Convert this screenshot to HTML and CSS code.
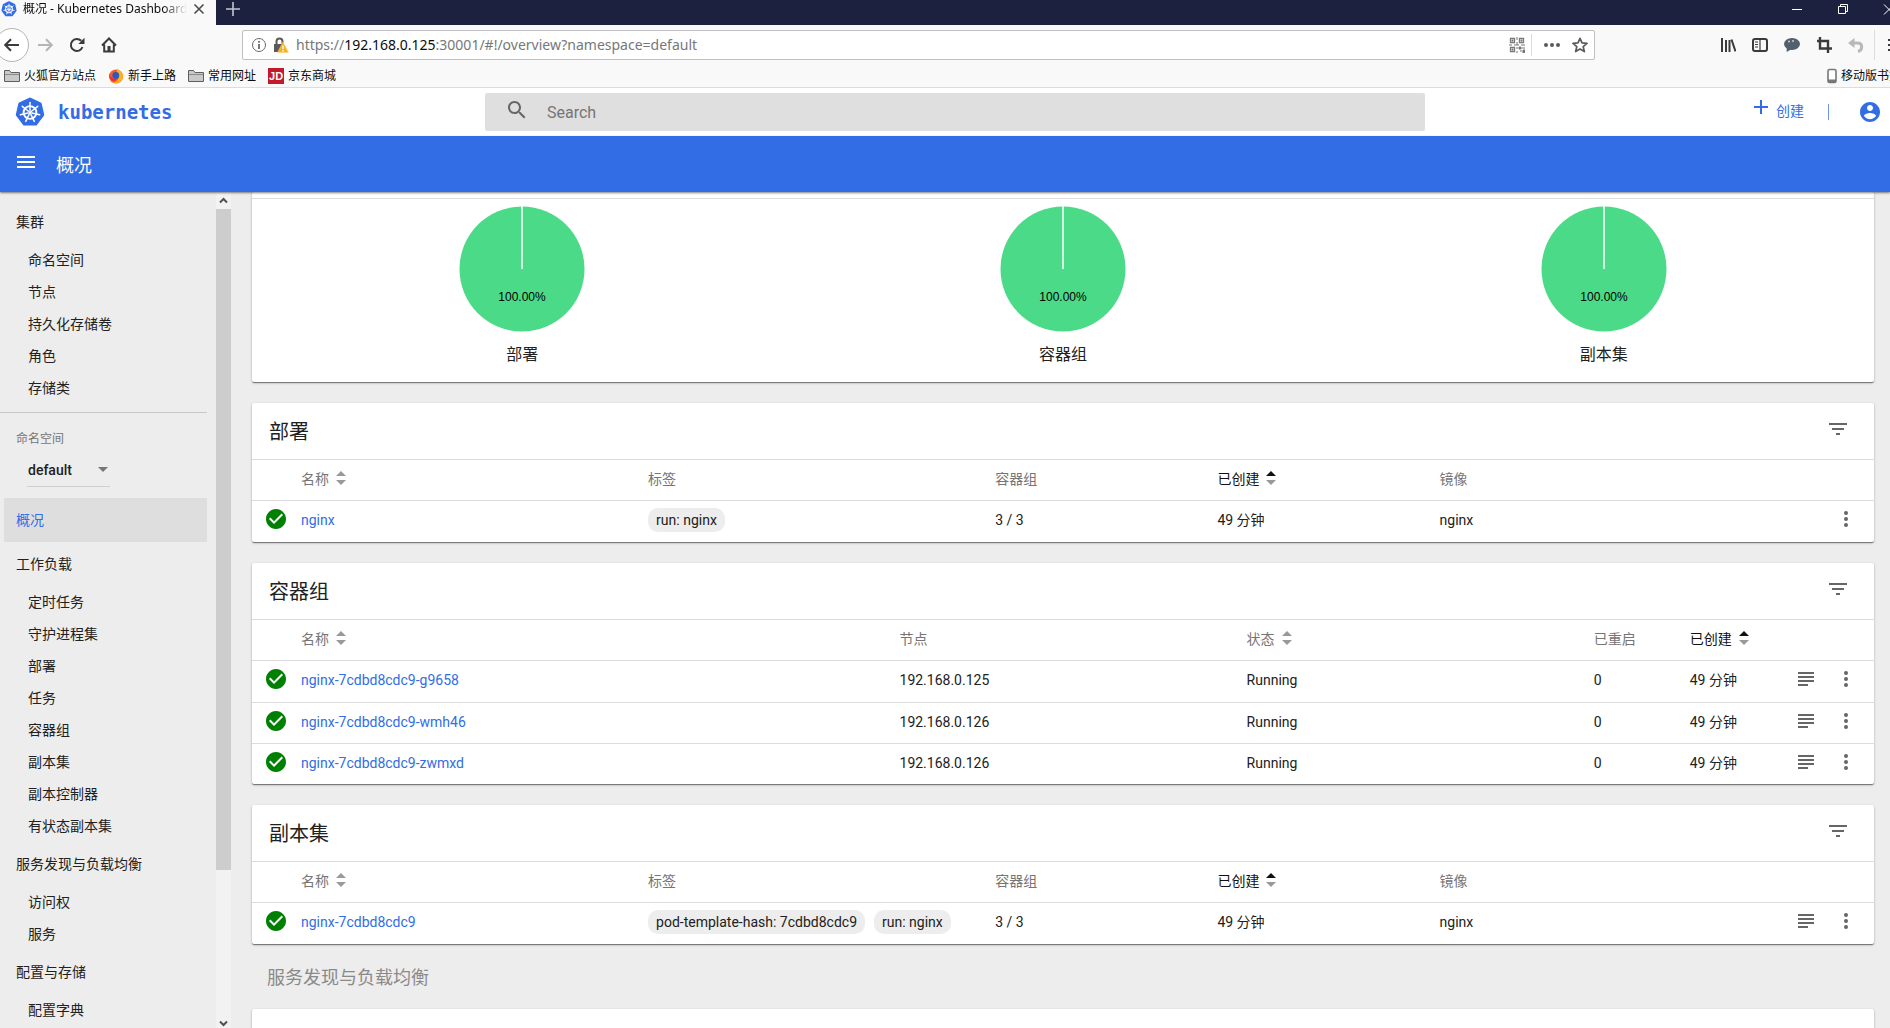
FILE: index.html
```html
<!DOCTYPE html>
<html lang="zh-CN">
<head>
<meta charset="utf-8">
<title>概况 - Kubernetes Dashboard</title>
<link rel="stylesheet" href="styles.css">
</head>
<body>
<svg class="defs" aria-hidden="true">
  <symbol id="k8s" viewBox="0 0 30 30">
    <path d="M15 2 25.2 6.8 27.7 17.8 20.7 27 9.3 27 2.3 17.8 4.8 6.8Z" fill="#326de6" stroke="#326de6" stroke-width="3" stroke-linejoin="round"/>
    <g stroke="#fff" fill="none" stroke-width="1.5" stroke-linecap="round">
      <circle cx="15" cy="15.5" r="6.4" stroke-width="1.9"/>
      <path d="M15 13.5V5.6"/>
      <path d="M15 13.5V5.6" transform="rotate(51.43 15 15.5)"/>
      <path d="M15 13.5V5.6" transform="rotate(102.86 15 15.5)"/>
      <path d="M15 13.5V5.6" transform="rotate(154.29 15 15.5)"/>
      <path d="M15 13.5V5.6" transform="rotate(205.71 15 15.5)"/>
      <path d="M15 13.5V5.6" transform="rotate(257.14 15 15.5)"/>
      <path d="M15 13.5V5.6" transform="rotate(308.57 15 15.5)"/>
    </g>
    <circle cx="15" cy="15.5" r="1.6" fill="#fff"/>
  </symbol>
  <symbol id="folder" viewBox="0 0 16 16"><path d="M.5 13.500V2.500H5.500L7 4.500H15.500V13.500Z" fill="#c9c9c9" stroke="#5f5f5f"/><path d="M1 6.500H15" stroke="#8a8a8a"/></symbol>
  <symbol id="sort" viewBox="0 0 12 16"><path class="up" d="M1 6 6 1 11 6Z"/><path class="down" d="M1 10 6 15 11 10Z"/></symbol>
  <symbol id="check" viewBox="0 0 24 24"><path fill="#fff" d="M5 5h14v14H5z"/><path fill="#008000" d="M12 2C6.480 2 2 6.480 2 12s4.480 10 10 10 10-4.480 10-10S17.520 2 12 2zm-2 15l-5-5 1.410-1.410L10 14.170l7.590-7.590L19 8l-9 9z"/></symbol>
  <symbol id="filter" viewBox="0 0 24 24"><path d="M10 18h4v-2h-4v2zM3 6v2h18V6H3zm3 7h12v-2H6v2z"/></symbol>
  <symbol id="logs" viewBox="0 0 24 24"><path d="M4 5h16v2H4zM4 9h16v2H4zM4 13h16v2H4zM4 17h10v2H4z"/></symbol>
  <symbol id="more" viewBox="0 0 24 24"><circle cx="12" cy="6" r="2"/><circle cx="12" cy="12" r="2"/><circle cx="12" cy="18" r="2"/></symbol>
</svg>

<div class="tabs">
  <div class="tab">
    <svg class="i16"><use href="#k8s"/></svg>
    <span class="tab-title">概况 - Kubernetes Dashboard</span>
    <button class="bare" aria-label="关闭标签页"><svg class="i16" viewBox="0 0 16 16"><path d="M3.500 3.500 12.500 12.500M12.500 3.500 3.500 12.500" stroke="#4a4a4f" stroke-width="1.600"/></svg></button>
  </div>
  <button class="bare new-tab" aria-label="新标签页"><svg class="i16" viewBox="0 0 16 16"><path d="M8 1V15M1 8H15" stroke="#c5c6d0" stroke-width="1.600"/></svg></button>
  <div class="window-buttons">
    <button class="bare" aria-label="最小化"><svg class="i16" viewBox="0 0 16 16"><path d="M3 8.500H13" stroke="#fff"/></svg></button>
    <button class="bare" aria-label="还原"><svg class="i16" viewBox="0 0 16 16"><path d="M3.500 5.500H10.500V12.500H3.500ZM5.500 5.500V3.500H12.500V10.500H10.500" fill="none" stroke="#fff"/></svg></button>
    <button class="bare" aria-label="关闭"><svg class="i16" viewBox="0 0 16 16"><path d="M3 3.500 13 13.500M13 3.500 3 13.500" stroke="#fff"/></svg></button>
  </div>
</div>

<div class="toolbar">
  <button class="bare back" aria-label="后退"><svg class="i16" viewBox="0 0 16 16"><path d="M15 8H1.500M7 2.200 1.200 8 7 13.800" fill="none" stroke="#3b3b3f" stroke-width="2"/></svg></button>
  <div class="nav-buttons">
    <button class="bare" aria-label="前进"><svg class="i16" viewBox="0 0 16 16"><path d="M1 8H14.500M9 2.200 14.800 8 9 13.800" fill="none" stroke="#b5b5b7" stroke-width="2"/></svg></button>
    <button class="bare" aria-label="刷新"><svg class="i16" viewBox="0 0 16 16"><path d="M13.500 10A6 6 0 1 1 12.200 3.800" fill="none" stroke="#3b3b3f" stroke-width="2"/><path d="M15.500.8V7H9.300Z" fill="#3b3b3f"/></svg></button>
    <button class="bare" aria-label="主页"><svg class="i16" viewBox="0 0 16 16"><path d="M1 8.500 8 1.500 15 8.500M3.200 7.500V14.500H12.800V7.500" fill="none" stroke="#3b3b3f" stroke-width="2"/><path d="M6.500 9h3v5.500h-3z" fill="#3b3b3f"/></svg></button>
  </div>
  <div class="address">
    <svg class="i16" viewBox="0 0 16 16"><circle cx="8" cy="8" r="6.500" fill="none" stroke="#6a6a6e"/><path d="M8 7V12M8 4V5.800" stroke="#6a6a6e" stroke-width="1.800"/></svg>
    <svg class="i16 lock" viewBox="0 0 16 16"><path d="M3.500 8V4.500a3 3 0 0 1 6 0V8" fill="none" stroke="#5a5a5e" stroke-width="2"/><path d="M1 7h10v8H1z" fill="#5a5a5e"/><path d="M10 5 15.500 15.500H4.500Z" fill="#f9b21d" stroke="#fbd27a" stroke-width=".5"/><path d="M10 8.500V12M10 13V14.500" stroke="#fff" stroke-width="1.300"/></svg>
    <p class="url">https://<b>192.168.0.125</b>:30001/#!/overview?namespace=default</p>
    <svg class="i16 qr" viewBox="0 0 16 16"><path d="M1.500 1.500h4v4h-4zM10.500 1.500h4v4h-4zM1.500 10.500h4v4h-4z" fill="none" stroke="#77777a" stroke-width="1.300"/><path d="M3 3h1v1H3zM12 3h1v1h-1zM3 12h1v1H3zM8 0v3M8 5v3M0 8h3M5 8h5M12 8h4M8 10v2M8 14v2M10 10h2v2h-2zM13 11h3M11 14h2M14 13h2v3h-2z" fill="#77777a" stroke="#77777a"/></svg>
    <span class="split"></span>
    <svg class="i16" viewBox="0 0 16 16"><g fill="#5a5a5e"><circle cx="2" cy="8" r="2"/><circle cx="8" cy="8" r="2"/><circle cx="14" cy="8" r="2"/></g></svg>
    <svg class="i16 star" viewBox="0 0 16 16"><path d="M8 1.300 10 5.900 15 6.400 11.200 9.700 12.400 14.600 8 12 3.600 14.600 4.800 9.700 1 6.400 6 5.900Z" fill="none" stroke="#5a5a5e" stroke-width="1.700" stroke-linejoin="round"/></svg>
  </div>
  <div class="tools">
    <svg class="i16" viewBox="0 0 16 16"><path d="M2 1V15M6 3V15M9.500 3V15M11.500 2.500 15.500 14.500" stroke="#3b3b3f" stroke-width="2"/></svg>
    <svg class="i16" viewBox="0 0 16 16"><rect x="1" y="2" width="14" height="12" rx="2" fill="none" stroke="#3b3b3f" stroke-width="2"/><path d="M8 2V14M3 5H6M3 7.500H6M3 10H6" stroke="#3b3b3f" stroke-width="1.200"/></svg>
    <svg class="i16" viewBox="0 0 16 16"><ellipse cx="8" cy="7" rx="8" ry="6" fill="#52606d"/><path d="M3 10 2.500 15 8 12Z" fill="#52606d"/><circle cx="5" cy="4.500" r="1" fill="#c5d0d8"/><circle cx="9" cy="4" r="1" fill="#c5d0d8"/></svg>
    <svg class="i16" viewBox="0 0 16 16"><path d="M1 4H12V16M4 0V11.500H16" fill="none" stroke="#3b3b3f" stroke-width="2.400"/></svg>
    <svg class="i16" viewBox="0 0 16 16"><path d="M5 6H9.500C15 6 15 13 10 14.500" fill="none" stroke="#b9b9bb" stroke-width="3"/><path d="M6.500 1V11L0 6Z" fill="#b9b9bb"/></svg>
    <span class="split tall"></span>
    <svg class="i16" viewBox="0 0 16 16"><path d="M0 3H16M0 8H16M0 13H16" stroke="#3b3b3f" stroke-width="2"/></svg>
  </div>
</div>

<div class="bookmarks">
  <a href="#"><svg class="i16"><use href="#folder"/></svg>火狐官方站点</a>
  <a href="#"><svg class="i16" viewBox="0 0 16 16"><circle cx="8" cy="8.500" r="7" fill="#ff5a1f"/><path d="M9 1C14 3 16.500 8 14 12 12 15 8 16 5 14.500 11 14 12 8 9 6Z" fill="#ffb51a"/><circle cx="7.800" cy="7.500" r="3.400" fill="#2a58c4"/><path d="M1 5C2 9 5 12 9 11 6 15 1 12 1 5Z" fill="#e8253c"/></svg>新手上路</a>
  <a href="#"><svg class="i16"><use href="#folder"/></svg>常用网址</a>
  <a href="#"><span class="jd">JD</span>京东商城</a>
  <a href="#" class="mobile"><svg class="phone" viewBox="0 0 10 16"><rect x="1" y="1.500" width="8" height="13" rx="1.500" fill="#fff" stroke="#77777a" stroke-width="1.600"/><path d="M1 13H9" stroke="#77777a" stroke-width="3"/></svg>移动版书签</a>
</div>

<header class="app-header">
  <a class="brand" href="#"><svg class="logo"><use href="#k8s"/></svg>kubernetes</a>
  <label class="search">
    <svg class="i24" viewBox="0 0 24 24"><path fill="#666" d="M15.500 14h-.79l-.28-.27C15.410 12.590 16 11.110 16 9.500 16 5.910 13.090 3 9.500 3S3 5.910 3 9.500 5.910 16 9.500 16c1.610 0 3.090-.59 4.230-1.570l.27.28v.79l5 4.990L20.490 19l-4.990-5zm-6 0C7.010 14 5 11.990 5 9.500S7.010 5 9.500 5 14 7.010 14 9.500 11.990 14 9.500 14z"/></svg>
    <input type="text" placeholder="Search" aria-label="Search">
  </label>
  <div class="actions">
    <button class="bare create"><svg class="i24" viewBox="0 0 24 24"><path fill="#326de6" d="M19 13h-6v6h-2v-6H5v-2h6V5h2v6h6v2z"/></svg>创建</button>
    <span class="bar"></span>
    <button class="bare" aria-label="账户"><svg class="i24" viewBox="0 0 24 24"><path fill="#326de6" d="M12 2C6.480 2 2 6.480 2 12s4.480 10 10 10 10-4.480 10-10S17.520 2 12 2zm0 3c1.660 0 3 1.340 3 3s-1.340 3-3 3-3-1.340-3-3 1.340-3 3-3zm0 14.200c-2.500 0-4.710-1.280-6-3.220.03-1.990 4-3.080 6-3.080 1.990 0 5.970 1.090 6 3.080-1.290 1.940-3.500 3.220-6 3.220z"/></svg></button>
  </div>
</header>

<div class="title-bar">
  <button class="bare" aria-label="菜单"><svg class="i24" viewBox="0 0 24 24"><path fill="#fff" d="M3 18h18v-2H3v2zm0-5h18v-2H3v2zm0-7v2h18V6H3z"/></svg></button>
  <h1>概况</h1>
</div>

<div class="body">
  <nav class="sidebar">
    <a class="group" href="#">集群</a>
    <a class="item" href="#">命名空间</a>
    <a class="item" href="#">节点</a>
    <a class="item" href="#">持久化存储卷</a>
    <a class="item" href="#">角色</a>
    <a class="item" href="#">存储类</a>
    <div class="namespace">
      <label for="ns">命名空间</label>
      <div class="picker">
        <select id="ns"><option>default</option></select>
        <svg viewBox="0 0 10 5"><path d="M0 0H10L5 5Z" fill="#777"/></svg>
      </div>
    </div>
    <a class="group active" href="#">概况</a>
    <a class="group" href="#">工作负载</a>
    <a class="item" href="#">定时任务</a>
    <a class="item" href="#">守护进程集</a>
    <a class="item" href="#">部署</a>
    <a class="item" href="#">任务</a>
    <a class="item" href="#">容器组</a>
    <a class="item" href="#">副本集</a>
    <a class="item" href="#">副本控制器</a>
    <a class="item" href="#">有状态副本集</a>
    <a class="group" href="#">服务发现与负载均衡</a>
    <a class="item" href="#">访问权</a>
    <a class="item" href="#">服务</a>
    <a class="group" href="#">配置与存储</a>
    <a class="item" href="#">配置字典</a>
  </nav>
  <div class="scrollbar">
    <svg viewBox="0 0 15 17"><path d="M4 10.500 7.500 7 11 10.500" fill="none" stroke="#505050" stroke-width="2"/></svg>
    <div class="track"><div class="thumb"></div></div>
    <svg viewBox="0 0 15 17"><path d="M4 6.500 7.500 10 11 6.500" fill="none" stroke="#505050" stroke-width="2"/></svg>
  </div>

  <main>
    <section class="card status">
      <figure><svg viewBox="0 0 126 126"><circle cx="63" cy="63" r="62.500" fill="#4bda87"/><path d="M63 0V63" stroke="#fff" stroke-width="1.500"/><text x="63" y="95">100.00%</text></svg><figcaption>部署</figcaption></figure>
      <figure><svg viewBox="0 0 126 126"><circle cx="63" cy="63" r="62.500" fill="#4bda87"/><path d="M63 0V63" stroke="#fff" stroke-width="1.500"/><text x="63" y="95">100.00%</text></svg><figcaption>容器组</figcaption></figure>
      <figure><svg viewBox="0 0 126 126"><circle cx="63" cy="63" r="62.500" fill="#4bda87"/><path d="M63 0V63" stroke="#fff" stroke-width="1.500"/><text x="63" y="95">100.00%</text></svg><figcaption>副本集</figcaption></figure>
    </section>

    <section class="card">
      <div class="card-head"><h2>部署</h2><button class="bare" aria-label="筛选"><svg class="i24"><use href="#filter"/></svg></button></div>
      <table>
        <colgroup><col class="c-icon"><col class="c-wide"><col class="c-wide"><col class="c-mid"><col class="c-mid"><col></colgroup>
        <thead><tr><th></th><th>名称<svg class="sort"><use href="#sort"/></svg></th><th>标签</th><th>容器组</th><th class="sorted">已创建<svg class="sort asc" viewBox="0 0 12 16"><path class="up" d="M1 6 6 1 11 6Z"/><path class="down" d="M1 10 6 15 11 10Z"/></svg></th><th>镜像</th></tr></thead>
        <tbody>
          <tr><td class="state"><svg class="i24"><use href="#check"/></svg></td><td><a href="#">nginx</a></td><td><span class="chip">run: nginx</span></td><td>3 / 3</td><td>49 分钟</td><td><div class="last"><span>nginx</span><button class="bare" aria-label="更多"><svg class="i24"><use href="#more"/></svg></button></div></td></tr>
        </tbody>
      </table>
    </section>

    <section class="card">
      <div class="card-head"><h2>容器组</h2><button class="bare" aria-label="筛选"><svg class="i24"><use href="#filter"/></svg></button></div>
      <table>
        <colgroup><col class="c-icon"><col class="c-name"><col class="c-wide"><col class="c-wide"><col class="c-count"><col></colgroup>
        <thead><tr><th></th><th>名称<svg class="sort"><use href="#sort"/></svg></th><th>节点</th><th>状态<svg class="sort"><use href="#sort"/></svg></th><th>已重启</th><th class="sorted">已创建<svg class="sort asc" viewBox="0 0 12 16"><path class="up" d="M1 6 6 1 11 6Z"/><path class="down" d="M1 10 6 15 11 10Z"/></svg></th></tr></thead>
        <tbody>
          <tr><td class="state"><svg class="i24"><use href="#check"/></svg></td><td><a href="#">nginx-7cdbd8cdc9-g9658</a></td><td>192.168.0.125</td><td>Running</td><td>0</td><td><div class="last"><span>49 分钟</span><button class="bare" aria-label="日志"><svg class="i24"><use href="#logs"/></svg></button><button class="bare" aria-label="更多"><svg class="i24"><use href="#more"/></svg></button></div></td></tr>
          <tr><td class="state"><svg class="i24"><use href="#check"/></svg></td><td><a href="#">nginx-7cdbd8cdc9-wmh46</a></td><td>192.168.0.126</td><td>Running</td><td>0</td><td><div class="last"><span>49 分钟</span><button class="bare" aria-label="日志"><svg class="i24"><use href="#logs"/></svg></button><button class="bare" aria-label="更多"><svg class="i24"><use href="#more"/></svg></button></div></td></tr>
          <tr><td class="state"><svg class="i24"><use href="#check"/></svg></td><td><a href="#">nginx-7cdbd8cdc9-zwmxd</a></td><td>192.168.0.126</td><td>Running</td><td>0</td><td><div class="last"><span>49 分钟</span><button class="bare" aria-label="日志"><svg class="i24"><use href="#logs"/></svg></button><button class="bare" aria-label="更多"><svg class="i24"><use href="#more"/></svg></button></div></td></tr>
        </tbody>
      </table>
    </section>

    <section class="card">
      <div class="card-head"><h2>副本集</h2><button class="bare" aria-label="筛选"><svg class="i24"><use href="#filter"/></svg></button></div>
      <table>
        <colgroup><col class="c-icon"><col class="c-wide"><col class="c-wide"><col class="c-mid"><col class="c-mid"><col></colgroup>
        <thead><tr><th></th><th>名称<svg class="sort"><use href="#sort"/></svg></th><th>标签</th><th>容器组</th><th class="sorted">已创建<svg class="sort asc" viewBox="0 0 12 16"><path class="up" d="M1 6 6 1 11 6Z"/><path class="down" d="M1 10 6 15 11 10Z"/></svg></th><th>镜像</th></tr></thead>
        <tbody>
          <tr><td class="state"><svg class="i24"><use href="#check"/></svg></td><td><a href="#">nginx-7cdbd8cdc9</a></td><td><span class="chip">pod-template-hash: 7cdbd8cdc9</span><span class="chip">run: nginx</span></td><td>3 / 3</td><td>49 分钟</td><td><div class="last"><span>nginx</span><button class="bare" aria-label="日志"><svg class="i24"><use href="#logs"/></svg></button><button class="bare" aria-label="更多"><svg class="i24"><use href="#more"/></svg></button></div></td></tr>
        </tbody>
      </table>
    </section>

    <h2 class="section-title">服务发现与负载均衡</h2>
    <section class="card next"></section>
  </main>
</div>
</body>
</html>
```
FILE: styles.css
```css
* { box-sizing: border-box; }

body {
  margin: 0;
  height: 100vh;
  overflow: hidden;
  display: flex;
  flex-direction: column;
  background: #ededed;
  color: #212121;
  font: 14px/20px Roboto, "Noto Sans CJK SC", sans-serif;
}

h1, h2, p, figure { margin: 0; font-weight: 400; }
a { color: inherit; text-decoration: none; }
svg { display: block; flex: none; }
.defs { position: absolute; width: 0; height: 0; }
.i16 { width: 16px; height: 16px; }
.i24 { width: 24px; height: 24px; }
.bare { border: 0; padding: 0; background: none; color: inherit; font: inherit; flex: none; }

/* Browser window */
.tabs, .toolbar, .bookmarks {
  flex: none;
  display: flex;
  align-items: center;
  overflow: hidden;
  background: #f9f9fa;
  color: #0c0c0d;
  font: 12px/16px "Noto Sans", "Noto Sans CJK SC", sans-serif;
}
.tabs { height: 25px; background: #1d2140; padding-bottom: 7px; }
.tab {
  flex: none;
  display: flex;
  align-items: center;
  width: 216px;
  height: 25px;
  margin-bottom: -7px;
  padding: 0 9px 7px 1px;
  background: #f9f9fa;
}
.tab-title {
  flex: 1;
  margin: 0 4px 0 6px;
  overflow: hidden;
  white-space: nowrap;
  mask-image: linear-gradient(to left, transparent, #000 24px);
}
.new-tab { margin-left: 9px; }
.window-buttons { margin-left: auto; margin-right: -7px; display: flex; gap: 30px; }

.toolbar { height: 40px; }
.back {
  width: 34px;
  height: 34px;
  margin-left: -5px;
  padding: 0 8px;
  border: 1px solid #b5b5b7;
  border-radius: 50%;
  background: #fff;
}
.nav-buttons { display: flex; gap: 16px; margin-left: 8px; }
.address {
  flex: 1;
  display: flex;
  align-items: center;
  height: 30px;
  margin: 0 125px;
  padding: 0 6px 0 8px;
  border: 1px solid #c0c0c2;
  border-radius: 2px;
  background: #fff;
}
.lock { margin-left: 6px; }
.url { flex: 1; margin-left: 7px; color: #77777a; font-size: 14px; line-height: 20px; }
.url b { color: #0c0c0d; font-weight: 400; }
.split { width: 1px; height: 22px; margin: 0 12px 0 6px; background: #dcdcde; }
.star { margin-left: 12px; }
.tools { display: flex; align-items: center; gap: 16px; margin-right: -14px; }
.tall { height: 30px; margin: 0 -3px 0 -6px; }
.tools .split + svg { margin-left: 0; }

.bookmarks { height: 23px; padding-left: 4px; gap: 12px; border-bottom: 1px solid #dcdcdc; }
.bookmarks a { display: flex; align-items: center; gap: 4px; white-space: nowrap; }
.jd {
  width: 16px;
  background: #c31a2b;
  color: #fff;
  font: 700 11px/16px "Liberation Sans", sans-serif;
  text-align: center;
}
.phone { width: 10px; height: 16px; }
.mobile { margin-left: auto; margin-right: -11px; }

/* Dashboard header */
.app-header {
  flex: none;
  display: grid;
  grid-template-columns: 485fr 940fr 465fr;
  align-items: center;
  height: 48px;
  background: #fff;
}
.brand {
  display: flex;
  align-items: center;
  gap: 13px;
  padding-left: 15px;
  color: #326de6;
  font: 700 19px/24px "DejaVu Sans Mono", monospace;
}
.logo { width: 30px; height: 30px; }
.search {
  display: flex;
  gap: 18px;
  height: 38px;
  padding: 5px 20px;
  border-radius: 2px;
  background: #dfdfdf;
}
.search input {
  flex: 1;
  border: 0;
  padding: 2px 0 0;
  outline: 0;
  background: none;
  font: 16px/28px Roboto, sans-serif;
}
.search input::placeholder { color: #757575; opacity: 1; }
.actions { display: flex; align-items: center; justify-content: flex-end; padding-right: 8px; color: #326de6; }
.create { display: flex; align-items: center; gap: 3px; padding-bottom: 2px; }
.create svg { margin-bottom: 8px; }
.bar { width: 1px; height: 16px; margin: 0 29px 0 24px; background: #6f94ea; }

.title-bar {
  flex: none;
  display: flex;
  align-items: center;
  gap: 18px;
  height: 56px;
  padding-left: 14px;
  background: #326de6;
  color: #fff;
  box-shadow: 0 1px 2px rgba(0, 0, 0, .5);
  z-index: 1;
}
.title-bar h1 { font-size: 18px; line-height: 24px; padding-top: 4px; }
.title-bar button { padding-bottom: 4px; }

.body { flex: 1; min-height: 0; display: flex; }

/* Side navigation */
.sidebar { flex: none; width: 207px; padding-top: 8px; overflow: hidden; }
.sidebar a { display: block; }
.group { padding-left: 16px; line-height: 44px; }
.item { padding-left: 28px; line-height: 32px; }
.active { margin-left: 4px; padding-left: 12px; background: #dedede; color: #326de6; }
.namespace {
  height: 86px;
  margin-top: 8px;
  padding: 16px 0 0 16px;
  border-top: 1px solid #c8c8c8;
}
.namespace label { display: block; color: #757575; font-size: 12px; line-height: 20px; }
.picker {
  display: grid;
  align-items: center;
  width: 83px;
  height: 34px;
  margin: 4px 0 0 11px;
  border-bottom: 1px solid #cfcfcf;
}
.picker > * { grid-area: 1 / 1; }
.picker select {
  appearance: none;
  border: 0;
  padding: 0 0 0 1px;
  background: none;
  color: #212121;
  font: 500 14px/20px Roboto, sans-serif;
}
.picker svg { width: 10px; height: 5px; margin-right: 2px; justify-self: end; pointer-events: none; }

.scrollbar {
  flex: none;
  display: flex;
  flex-direction: column;
  width: 15px;
  margin: 0 0 -4px 9px;
  background: #f2f2f2;
}
.scrollbar svg { width: 15px; height: 17px; }
.track { flex: 1; }
.thumb { height: 82%; background: #cdcdcd; }

/* Content */
main { flex: 1; min-width: 0; padding: 0 16px 0 21px; overflow: hidden; }
.card {
  margin-bottom: 21px;
  background: #fff;
  border-radius: 2px;
  box-shadow: 0 1px 3px rgba(0, 0, 0, .2), 0 1px 1px rgba(0, 0, 0, .3), 0 2px 1px -1px rgba(0, 0, 0, .2);
}
.status { display: flex; padding: 6px 0 15px; }
.status figure {
  flex: 1;
  display: flex;
  flex-direction: column;
  align-items: center;
  padding-top: 7px;
  border-top: 1px solid #dcdcdc;
}
.status svg { width: 126px; height: 126px; }
.status text { font: 12px "Liberation Sans", sans-serif; text-anchor: middle; fill: #000; }
.status figcaption { margin-top: 11px; font-size: 16px; line-height: 24px; }

.card-head {
  display: flex;
  align-items: center;
  justify-content: space-between;
  height: 57px;
  padding: 0 24px 0 17px;
  border-bottom: 1px solid #dcdcdc;
}
.card-head h2 { font-size: 20px; line-height: 28px; padding-top: 2px; }
.card-head svg, .last svg { fill: #666; }
.card-head button { padding-bottom: 4px; }

table { width: 100%; table-layout: fixed; border-collapse: separate; border-spacing: 0; }
.c-icon { width: 49px; }
.c-wide { width: 21.4%; }
.c-mid { width: 13.7%; }
.c-name { width: 36.9%; }
.c-count { width: 96px; }
th, td { height: 41px; padding: 0; text-align: left; font-weight: 400; white-space: nowrap; }
th { color: #757575; padding-bottom: 2px; border-bottom: 1px solid #dcdcdc; }
td { padding-bottom: 3px; }
tr + tr td { border-top: 1px solid #dcdcdc; }
.sorted { color: #111; }
.sort { display: inline-block; width: 12px; height: 16px; margin-left: 6px; vertical-align: -2px; fill: #999; }
.asc .up { fill: #111; }
td a { color: #326de6; }
.state { padding-bottom: 5px; }
.state svg { margin-left: 12px; }
.chip {
  display: inline-block;
  margin-right: 9px;
  padding: 0 8px;
  border-radius: 10px;
  background: #ededed;
  line-height: 24px;
}
.last { display: flex; align-items: center; gap: 16px; height: 28px; padding-right: 16px; }
.last span { flex: 1; }
.last button { padding-bottom: 2px; }
.section-title { margin-top: -21px; padding: 2px 0 0 15px; color: #8a8a8a; font-size: 18px; line-height: 63px; }
.next { height: 200px; }
```
